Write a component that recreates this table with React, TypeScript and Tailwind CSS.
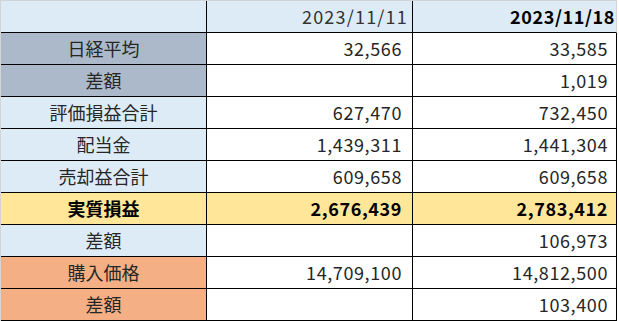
import React from "react";

type Row = {
  label: string;
  a: string;
  b: string;
  labelBg: string;
  rowBg?: string;
  bold?: boolean;
};

const rows: Row[] = [
  { label: "日経平均", a: "32,566", b: "33,585", labelBg: "bg-[#acb9ca]" },
  { label: "差額", a: "", b: "1,019", labelBg: "bg-[#acb9ca]" },
  { label: "評価損益合計", a: "627,470", b: "732,450", labelBg: "bg-[#ddebf7]" },
  { label: "配当金", a: "1,439,311", b: "1,441,304", labelBg: "bg-[#ddebf7]" },
  { label: "売却益合計", a: "609,658", b: "609,658", labelBg: "bg-[#ddebf7]" },
  { label: "実質損益", a: "2,676,439", b: "2,783,412", labelBg: "bg-[#ffe699]", rowBg: "bg-[#ffe699]", bold: true },
  { label: "差額", a: "", b: "106,973", labelBg: "bg-[#ddebf7]" },
  { label: "購入価格", a: "14,709,100", b: "14,812,500", labelBg: "bg-[#f4b084]" },
  { label: "差額", a: "", b: "103,400", labelBg: "bg-[#f4b084]" },
];

export default function App() {
  return (
    <div
      className="w-[619px] h-[321px] bg-white overflow-hidden text-[18px] text-[#262626]"
      style={{ fontFamily: '"Noto Sans CJK JP", "Noto Sans", sans-serif' }}
    >
      <div className="w-[617px] border-t border-l border-[#d4d4d4]">
        <div className="grid grid-cols-[206px_206px_204px] h-[32px]">
          <div className="bg-[#ddebf7] border-r border-b border-black" />
          <div className="bg-[#ddebf7] border-r border-b border-black flex items-center justify-end pr-[4px] text-[#333] tracking-[1.2px]">
            2023/11/11
          </div>
          <div className="bg-[#ddebf7] border-r border-r-[#d4d4d4] border-b border-b-black flex items-center justify-end pr-[1px] font-bold text-black tracking-[0.6px]">
            2023/11/18
          </div>
        </div>
        {rows.map((r, i) => (
          <div key={i} className={`grid grid-cols-[206px_206px_204px] h-[32px] ${r.bold ? "font-bold text-black" : ""}`}>
            <div className={`${r.labelBg} border-r border-b border-black flex items-center justify-center`}>
              {r.label}
            </div>
            <div className={`${r.rowBg ?? "bg-white"} border-r border-b border-black flex items-center justify-end pr-[10px] tracking-[0.6px] tabular-nums`}>
              {r.a}
            </div>
            <div className={`${r.rowBg ?? "bg-white"} border-r border-b border-black flex items-center justify-end pr-[8px] tracking-[0.6px] tabular-nums`}>
              {r.b}
            </div>
          </div>
        ))}
      </div>
    </div>
  );
}
